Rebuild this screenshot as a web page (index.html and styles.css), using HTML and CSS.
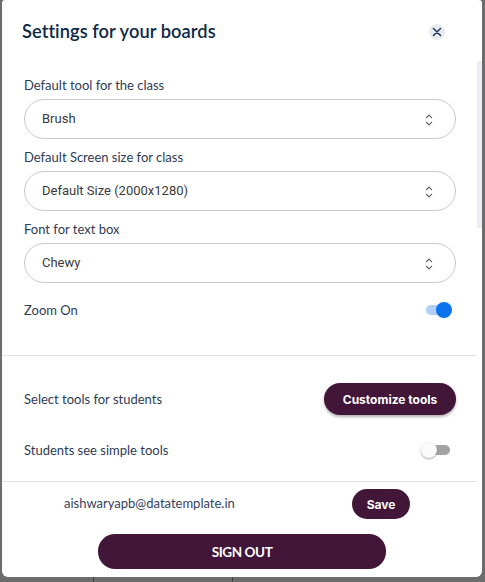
FILE: index.html
```html
<!DOCTYPE html>
<html lang="en">
<head>
<meta charset="utf-8">
<title>Settings for your boards</title>
<link rel="stylesheet" href="styles.css">
</head>
<body>
<div class="backdrop">
  <div class="modal">
    <div class="scroll-thumb"></div>
    <header class="modal-header">
      <h1 class="title">Settings for your boards</h1>
      <button class="close" aria-label="Close">
        <svg width="16" height="16" viewBox="0 0 16 16"><path d="M4.5 4.5 L11.5 11.5 M11.5 4.5 L4.5 11.5" stroke="#2c3e5c" stroke-width="1.6" stroke-linecap="round" fill="none"/></svg>
      </button>
    </header>
    <section class="section-main">
      <label class="field-label">Default tool for the class</label>
      <div class="select"><span>Brush</span><svg class="arrows" width="10" height="16" viewBox="0 0 10 16"><path d="M2 6 L5 3 L8 6 M2 10 L5 13 L8 10" stroke="#666" stroke-width="1.1" fill="none"/></svg></div>
      <label class="field-label">Default Screen size for class</label>
      <div class="select"><span>Default Size (2000x1280)</span><svg class="arrows" width="10" height="16" viewBox="0 0 10 16"><path d="M2 6 L5 3 L8 6 M2 10 L5 13 L8 10" stroke="#666" stroke-width="1.1" fill="none"/></svg></div>
      <label class="field-label">Font for text box</label>
      <div class="select"><span>Chewy</span><svg class="arrows" width="10" height="16" viewBox="0 0 10 16"><path d="M2 6 L5 3 L8 6 M2 10 L5 13 L8 10" stroke="#666" stroke-width="1.1" fill="none"/></svg></div>
      <div class="row zoom-row">
        <span class="row-label">Zoom On</span>
        <span class="toggle on"><span class="knob"></span></span>
      </div>
    </section>
    <section class="section-students">
      <div class="row tools-row">
        <span class="row-label">Select tools for students</span>
        <button class="btn-customize">Customize tools</button>
      </div>
      <div class="row simple-row">
        <span class="row-label">Students see simple tools</span>
        <span class="toggle off"><span class="knob"></span></span>
      </div>
    </section>
    <footer class="modal-footer">
      <div class="footer-row">
        <span class="email">aishwaryapb@datatemplate.in</span>
        <button class="btn-save">Save</button>
      </div>
      <button class="btn-signout">SIGN OUT</button>
    </footer>
  </div>
  <div class="below">
    <span class="seg s1"></span><span class="seg s2"></span>
  </div>
</div>
</body>
</html>
```
FILE: styles.css
```css
* { box-sizing: border-box; }
html, body { margin: 0; padding: 0; }
body {
  background: #6c6c6c;
  width: 485px;
  height: 582px;
  overflow: hidden;
  font-family: "Lato", "Liberation Sans", sans-serif;
}
.backdrop {
  padding-left: 2px;
  width: 485px;
}
.modal {
  position: relative;
  width: 480px;
  height: 577px;
  background: #fff;
  border-radius: 3px 3px 6px 6px;
  display: flex;
  flex-direction: column;
}
.scroll-thumb {
  position: absolute;
  left: 475px;
  top: 61px;
  width: 5px;
  height: 167px;
  background: #ececf3;
  border-radius: 1px;
}
.modal-header {
  display: flex;
  justify-content: space-between;
  align-items: flex-start;
  padding: 20px 37px 0 20px;
  height: 77px;
}
.title {
  margin: 0;
  font-size: 18.3px;
  line-height: 23px;
  font-weight: 600;
  color: #0e2a47;
  letter-spacing: 0.05px;
}
.close {
  width: 16px;
  height: 16px;
  margin-top: 4px;
  padding: 0;
  border: none;
  border-radius: 50%;
  background: #e8eaf1;
  display: flex;
  align-items: center;
  justify-content: center;
}
.section-main {
  padding: 0 21px 0 22px;
  display: flex;
  flex-direction: column;
  border-bottom: 1px solid #e2e2e2;
  margin-right: 5px;
  height: 279px;
}
.field-label {
  display: block;
  font-size: 13px;
  line-height: 16px;
  color: #2f3b55;
  margin-bottom: 6px;
}
.select {
  height: 40px;
  border: 1px solid #c9c9c9;
  border-radius: 20px;
  display: flex;
  align-items: center;
  justify-content: space-between;
  padding: 0 21px 0 17px;
  margin-bottom: 10px;
  font-family: "Roboto", "Liberation Sans", sans-serif;
  font-size: 13px;
  color: #3a3a3a;
}
.select span { margin-top: -1px; }
.arrows { margin-top: 1px; }
.row {
  display: flex;
  align-items: center;
  justify-content: space-between;
}
.row-label {
  font-size: 13px;
  line-height: 16px;
  color: #2f3b55;
}
.zoom-row {
  margin-top: 7px;
  height: 20px;
  padding-right: 6px;
}
.toggle {
  position: relative;
  display: inline-block;
  width: 24px;
  height: 10px;
  border-radius: 5px;
}
.toggle .knob {
  position: absolute;
  top: -3px;
  width: 16px;
  height: 16px;
  border-radius: 50%;
}
.toggle.on { background: #b0cdf8; }
.toggle.on .knob { right: -2px; background: #0d72ee; }
.toggle.off { background: #a3a3a3; width: 21px; }
.toggle.off .knob {
  left: -8px;
  background: #fafafa;
  box-shadow: 0 1px 2px rgba(0,0,0,0.35);
}
.section-students {
  border-bottom: 1px solid #e2e2e2;
  margin-right: 5px;
  padding: 27px 21px 0 22px;
  height: 126px;
}
.tools-row { height: 32px; }
.btn-customize {
  width: 132px;
  height: 32px;
  border: none;
  border-radius: 16px;
  background: #421638;
  color: #fff;
  font-family: "Inter", "Liberation Sans", sans-serif;
  font-weight: 700;
  font-size: 12px;
  box-shadow: 0 2px 3px rgba(0,0,0,0.3);
  padding: 0;
}
.simple-row {
  margin-top: 27px;
  height: 16px;
  padding-right: 6px;
}
.modal-footer {
  display: flex;
  flex-direction: column;
  align-items: center;
  padding-top: 7px;
}
.footer-row {
  align-self: stretch;
  display: flex;
  align-items: center;
  justify-content: space-between;
  padding: 0 72px 0 62px;
  height: 30px;
}
.email {
  font-size: 13px;
  color: #36425e;
  margin-top: -3px;
}
.btn-save {
  width: 58px;
  height: 30px;
  border: none;
  border-radius: 15px;
  background: #421638;
  color: #fff;
  font-family: "Inter", "Liberation Sans", sans-serif;
  font-weight: 700;
  font-size: 12px;
  padding: 0;
}
.btn-signout {
  margin-top: 15px;
  width: 288px;
  height: 35px;
  border: none;
  border-radius: 17px;
  background: #421638;
  color: #fff;
  font-family: "Lato", "Liberation Sans", sans-serif;
  font-weight: 700;
  font-size: 13.5px;
  letter-spacing: -0.4px;
  padding: 0;
}
.below {
  height: 5px;
  position: relative;
}
.seg {
  position: absolute;
  top: 0;
  width: 1px;
  height: 5px;
  background: #444;
}
.s1 { left: 91px; }
.s2 { left: 230px; }
```
